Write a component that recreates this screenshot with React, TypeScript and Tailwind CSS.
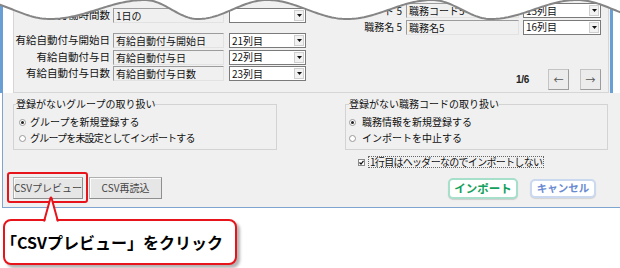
import React from 'react'

const JP = "font-['Noto_Sans_CJK_JP','Noto_Sans',sans-serif]"

// crests (y=0) and troughs (y=19) of the torn edge, left to right
const EXTREMA: [number, number][] = [
  [-25, 0], [50, 19], [145, 0], [198, 19], [267, 0], [347, 19], [432, 0], [491, 19], [577, 0], [650, 19],
]

function wavePoints() {
  const pts: string[] = []
  for (let x = -2; x <= 622; x += 2) {
    let i = 0
    while (i < EXTREMA.length - 2 && x > EXTREMA[i + 1][0]) i++
    const [x0, y0] = EXTREMA[i]
    const [x1, y1] = EXTREMA[i + 1]
    const t = (x - x0) / (x1 - x0)
    const y = y0 + ((y1 - y0) * (1 - Math.cos(Math.PI * t))) / 2
    pts.push(`${x},${y.toFixed(2)}`)
  }
  return pts
}

function ReadBox({ text, w }: { text: string; w: string }) {
  return (
    <div
      className={`${w} h-[15px] border border-t-[#9c9c9c] border-l-[#9c9c9c] border-r-[#e2e2e2] border-b-[#e2e2e2] bg-[#f0f0f0] pl-[2px] text-[10px] leading-[13px] text-[#111] whitespace-nowrap overflow-hidden`}
    >
      {text}
    </div>
  )
}

function Select({ value, w }: { value: string; w: string }) {
  return (
    <div className={`${w} h-[15px] border border-[#7a7a7a] bg-white flex items-center justify-between`}>
      <span className="pl-[2px] text-[10px] leading-none text-[#111]">{value}</span>
      <span className="mr-[1px] w-[10px] h-[11px] bg-[#f2f2f2] border border-[#cfcfcf] flex items-center justify-center">
        <svg width="5" height="3" viewBox="0 0 5 3">
          <path d="M0 0h5L2.5 3z" fill="#111" />
        </svg>
      </span>
    </div>
  )
}

function LeftRow({ label, box, col }: { label: string; box: string; col: string }) {
  return (
    <div className="flex items-center h-[15px]">
      <span className="w-[96px] text-right text-[10.5px] leading-none text-[#111] whitespace-nowrap">{label}</span>
      <div className="ml-[3px]">
        <ReadBox text={box} w="w-[111px]" />
      </div>
      <div className="ml-[5px]">
        <Select value={col} w="w-[77px]" />
      </div>
    </div>
  )
}

function RightRow({ label, box, col }: { label: string; box: string; col: string }) {
  return (
    <div className="flex items-center h-[15px]">
      <span className="w-[80px] text-right text-[10px] leading-none text-[#111] whitespace-nowrap">{label}</span>
      <div className="ml-[4px]">
        <ReadBox text={box} w="w-[113px]" />
      </div>
      <div className="ml-[4px]">
        <Select value={col} w="w-[78px]" />
      </div>
    </div>
  )
}

function Radio({ on }: { on?: boolean }) {
  return (
    <span className="w-[7px] h-[7px] rounded-full border border-[#9a9a9a] bg-white flex items-center justify-center shrink-0">
      {on && <span className="w-[3px] h-[3px] rounded-full bg-[#222]" />}
    </span>
  )
}

function WinButton({ children, w }: { children: React.ReactNode; w: string }) {
  return (
    <div
      className={`${w} h-[22px] flex items-center justify-center bg-[#e6e6e6] border border-[#b0b0b0] border-b-[#8f8f8f] border-r-[#8f8f8f] shadow-[inset_1px_1px_0_#fbfbfb] text-[10px] leading-none text-[#444]`}
    >
      {children}
    </div>
  )
}

export default function App() {
  const pts = wavePoints()
  return (
    <div className={`relative w-[620px] h-[268px] bg-white overflow-hidden ${JP}`}>
      {/* window */}
      <div className="flex flex-col">
        <div className="flex h-[93px]">
          <div className="w-[3px] bg-[#6a9fd6]" />
          <div className="ml-[10px] w-[596px] h-[93px] border-x border-b border-[#d6d6d6] bg-[#f0f0f0] flex">
            <div className="flex flex-col pt-[8px]">
              <LeftRow label="労働時間数" box="1日の" col="" />
              <div className="mt-[10px] flex flex-col gap-[1.5px]">
                <LeftRow label="有給自動付与開始日" box="有給自動付与開始日" col="21列目" />
                <LeftRow label="有給自動付与日" box="有給自動付与日" col="22列目" />
                <LeftRow label="有給自動付与日数" box="有給自動付与日数" col="23列目" />
              </div>
            </div>
            <div className="ml-auto pr-[7px] pt-[3px] pb-[2px] flex flex-col">
              <div className="flex flex-col gap-[1.5px]">
                <RightRow label="職務コード 5" box="職務コード5" col="15列目" />
                <RightRow label="職務名 5" box="職務名5" col="16列目" />
              </div>
              <div className="mt-auto flex items-center justify-end">
                <span className="text-[10px] leading-none font-bold text-[#222] font-['Liberation_Sans',sans-serif] tracking-[-0.3px]">
                  1/6
                </span>
                <div className="ml-[19px] w-[21px] h-[21px] flex items-center justify-center bg-[#ececec] border border-[#c4c4c4] border-b-[#9c9c9c] border-r-[#9c9c9c] text-[10px] text-[#555]">
                  ←
                </div>
                <div className="ml-[11px] w-[21px] h-[21px] flex items-center justify-center bg-[#ececec] border border-[#c4c4c4] border-b-[#9c9c9c] border-r-[#9c9c9c] text-[10px] text-[#555]">
                  →
                </div>
              </div>
            </div>
          </div>
          <div className="w-[1px] bg-[#f0f0f0]" />
          <div className="w-[3px] bg-[#6a9fd6]" />
        </div>

        <div className="ml-[2px] h-[115px] border-l border-b border-[#7ea5cf] bg-[#f0f0f0] pl-[4px] flex">
          <div className="flex flex-col">
            <fieldset className="ml-[6px] mt-[5px] w-[264px] border border-[#d3d3d3] pt-[5px] pb-[4px]">
              <legend className="ml-[2px] text-[10px] leading-[12px] text-[#111]">登録がないグループの取り扱い</legend>
              <div className="flex items-center h-[14px] pl-[5px]">
                <Radio on />
                <span className="ml-[4px] text-[10px] leading-none text-[#111]">グループを新規登録する</span>
              </div>
              <div className="mt-[2px] flex items-center h-[14px] pl-[5px]">
                <Radio />
                <span className="ml-[4px] text-[10px] leading-none text-[#111] tracking-[-0.8px]">
                  グループを未設定としてインポートする
                </span>
              </div>
            </fieldset>
            <div className="mt-[22px] flex items-center">
              <div className="border-2 border-[#e8141b] rounded-[3px] pl-[4px] pt-[3px] pr-[3px] pb-[2px]">
                <WinButton w="w-[70px]">CSVプレビュー</WinButton>
              </div>
              <div className="ml-[1px]">
                <WinButton w="w-[73px]">CSV再読込</WinButton>
              </div>
            </div>
          </div>

          <div className="ml-auto mr-[12px] w-[263px] flex flex-col">
            <fieldset className="mt-[5px] w-[263px] border border-[#d3d3d3] pt-[5px] pb-[4px]">
              <legend className="ml-[3px] text-[10px] leading-[12px] text-[#111]">登録がない職務コードの取り扱い</legend>
              <div className="flex items-center h-[14px] pl-[3px]">
                <Radio on />
                <span className="ml-[6px] text-[10px] leading-none text-[#111]">職務情報を新規登録する</span>
              </div>
              <div className="mt-[2px] flex items-center h-[14px] pl-[3px]">
                <Radio />
                <span className="ml-[6px] text-[10px] leading-none text-[#111]">インポートを中止する</span>
              </div>
            </fieldset>
            <div className="mt-[6px] h-[12px] flex items-center pl-[13px]">
              <span className="w-[7px] h-[7px] border border-[#8a8a8a] bg-white flex items-center justify-center">
                <svg width="5" height="5" viewBox="0 0 5 5">
                  <path d="M0.5 2.5 L2 4 L4.5 0.8" stroke="#111" strokeWidth="1.2" fill="none" />
                </svg>
              </span>
              <span className="ml-[3px] px-[1px] border border-dotted border-[#666] text-[10px] leading-[10px] text-[#111] tracking-[-0.7px]">
                1行目はヘッダーなのでインポートしない
              </span>
            </div>
            <div className="mt-[10px] pr-[12px] flex items-center justify-end">
              <div className="w-[70px] h-[21px] flex items-center justify-center bg-white border-2 border-[#a6dfca] rounded-[5px] shadow-[0_1px_1px_rgba(0,0,0,0.15)] text-[11.5px] leading-none font-bold text-[#13a05c]">
                インポート
              </div>
              <div className="ml-[12px] w-[66px] h-[19px] flex items-center justify-center bg-white border-2 border-[#cad8f0] rounded-[5px] shadow-[0_1px_1px_rgba(0,0,0,0.12)] text-[10.5px] leading-none font-bold text-[#6a8ad2]">
                キャンセル
              </div>
            </div>
          </div>
        </div>

        {/* callout */}
        <div className="relative mt-[11px] ml-[3px] w-[234px] h-[46px] border-2 border-[#e8141b] rounded-[8px] bg-white shadow-[3px_3px_3px_rgba(0,0,0,0.3)] flex items-center">
          <span className="-ml-[4px] text-[16px] leading-none font-bold text-black whitespace-nowrap">
            「CSVプレビュー」をクリック
          </span>
          <svg className="absolute left-[38px] top-[-25px]" width="16" height="28" viewBox="0 0 16 28">
            <path d="M1.5 28 L8 2 L14.5 28 Z" fill="#fff" />
            <path d="M1 25.5 L7.4 2.2 Q8 1 8.6 2.2 L15 25.5" stroke="#e8141b" strokeWidth="2" fill="none" strokeLinejoin="round" />
          </svg>
        </div>
      </div>

      {/* torn edge */}
      <svg className="absolute left-0 top-0" width="620" height="24" viewBox="0 0 620 24">
        <path d={`M-2,-4 L${pts.join(' L')} L622,-4 Z`} fill="#fff" />
        <polyline points={pts.join(' ')} fill="none" stroke="#858585" strokeWidth="2" />
      </svg>
    </div>
  )
}
